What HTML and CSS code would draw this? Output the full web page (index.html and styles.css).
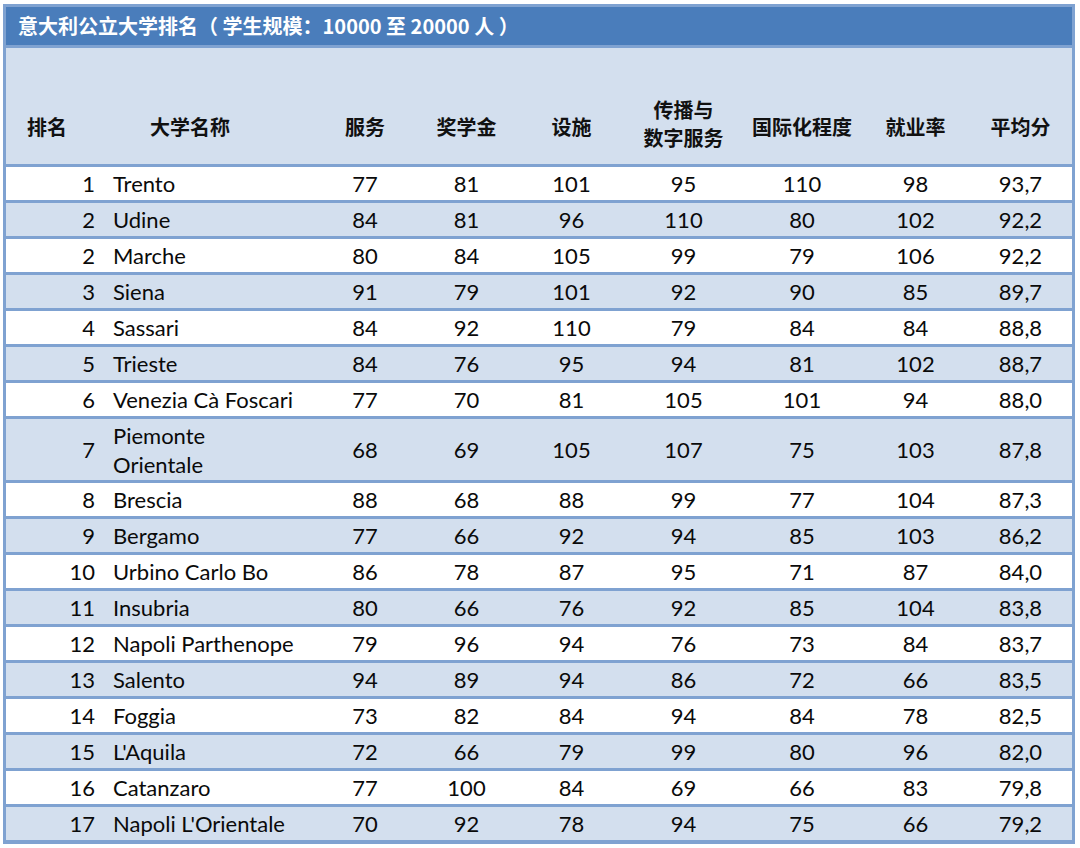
FILE: index.html
```html
<!DOCTYPE html>
<html lang="zh-CN">
<head>
<meta charset="utf-8">
<title>意大利公立大学排名</title>
<link rel="stylesheet" href="styles.css">
</head>
<body>
<div class="frame">
  <div class="title">意大利公立大学排名（ 学生规模：10000 至 20000 人 ）</div>
  <div class="head row">
    <div class="c rank-h">排名</div>
    <div class="c name-h">大学名称</div>
    <div class="c">服务</div>
    <div class="c">奖学金</div>
    <div class="c">设施</div>
    <div class="c two">传播与<br>数字服务</div>
    <div class="c">国际化程度</div>
    <div class="c">就业率</div>
    <div class="c">平均分</div>
  </div>
  <div class="row"><div class="c rank">1</div><div class="c name">Trento</div><div class="c">77</div><div class="c">81</div><div class="c">101</div><div class="c">95</div><div class="c">110</div><div class="c">98</div><div class="c">93,7</div></div>
  <div class="row alt"><div class="c rank">2</div><div class="c name">Udine</div><div class="c">84</div><div class="c">81</div><div class="c">96</div><div class="c">110</div><div class="c">80</div><div class="c">102</div><div class="c">92,2</div></div>
  <div class="row"><div class="c rank">2</div><div class="c name">Marche</div><div class="c">80</div><div class="c">84</div><div class="c">105</div><div class="c">99</div><div class="c">79</div><div class="c">106</div><div class="c">92,2</div></div>
  <div class="row alt"><div class="c rank">3</div><div class="c name">Siena</div><div class="c">91</div><div class="c">79</div><div class="c">101</div><div class="c">92</div><div class="c">90</div><div class="c">85</div><div class="c">89,7</div></div>
  <div class="row"><div class="c rank">4</div><div class="c name">Sassari</div><div class="c">84</div><div class="c">92</div><div class="c">110</div><div class="c">79</div><div class="c">84</div><div class="c">84</div><div class="c">88,8</div></div>
  <div class="row alt"><div class="c rank">5</div><div class="c name">Trieste</div><div class="c">84</div><div class="c">76</div><div class="c">95</div><div class="c">94</div><div class="c">81</div><div class="c">102</div><div class="c">88,7</div></div>
  <div class="row"><div class="c rank">6</div><div class="c name">Venezia Cà Foscari</div><div class="c">77</div><div class="c">70</div><div class="c">81</div><div class="c">105</div><div class="c">101</div><div class="c">94</div><div class="c">88,0</div></div>
  <div class="row alt tall"><div class="c rank">7</div><div class="c name">Piemonte<br>Orientale</div><div class="c">68</div><div class="c">69</div><div class="c">105</div><div class="c">107</div><div class="c">75</div><div class="c">103</div><div class="c">87,8</div></div>
  <div class="row"><div class="c rank">8</div><div class="c name">Brescia</div><div class="c">88</div><div class="c">68</div><div class="c">88</div><div class="c">99</div><div class="c">77</div><div class="c">104</div><div class="c">87,3</div></div>
  <div class="row alt"><div class="c rank">9</div><div class="c name">Bergamo</div><div class="c">77</div><div class="c">66</div><div class="c">92</div><div class="c">94</div><div class="c">85</div><div class="c">103</div><div class="c">86,2</div></div>
  <div class="row"><div class="c rank">10</div><div class="c name">Urbino Carlo Bo</div><div class="c">86</div><div class="c">78</div><div class="c">87</div><div class="c">95</div><div class="c">71</div><div class="c">87</div><div class="c">84,0</div></div>
  <div class="row alt"><div class="c rank">11</div><div class="c name">Insubria</div><div class="c">80</div><div class="c">66</div><div class="c">76</div><div class="c">92</div><div class="c">85</div><div class="c">104</div><div class="c">83,8</div></div>
  <div class="row"><div class="c rank">12</div><div class="c name">Napoli Parthenope</div><div class="c">79</div><div class="c">96</div><div class="c">94</div><div class="c">76</div><div class="c">73</div><div class="c">84</div><div class="c">83,7</div></div>
  <div class="row alt"><div class="c rank">13</div><div class="c name">Salento</div><div class="c">94</div><div class="c">89</div><div class="c">94</div><div class="c">86</div><div class="c">72</div><div class="c">66</div><div class="c">83,5</div></div>
  <div class="row"><div class="c rank">14</div><div class="c name">Foggia</div><div class="c">73</div><div class="c">82</div><div class="c">84</div><div class="c">94</div><div class="c">84</div><div class="c">78</div><div class="c">82,5</div></div>
  <div class="row alt"><div class="c rank">15</div><div class="c name">L'Aquila</div><div class="c">72</div><div class="c">66</div><div class="c">79</div><div class="c">99</div><div class="c">80</div><div class="c">96</div><div class="c">82,0</div></div>
  <div class="row"><div class="c rank">16</div><div class="c name">Catanzaro</div><div class="c">77</div><div class="c">100</div><div class="c">84</div><div class="c">69</div><div class="c">66</div><div class="c">83</div><div class="c">79,8</div></div>
  <div class="row alt last"><div class="c rank">17</div><div class="c name">Napoli L'Orientale</div><div class="c">70</div><div class="c">92</div><div class="c">78</div><div class="c">94</div><div class="c">75</div><div class="c">66</div><div class="c">79,2</div></div>
</div>
</body>
</html>
```
FILE: styles.css
```css
html, body {
  margin: 0;
  padding: 0;
  background: #ffffff;
}
body {
  font-family: Lato, "Noto Sans CJK SC", sans-serif;
  color: #0a0a0a;
}
.frame {
  margin: 4px 5px 5px 3px;
  width: 1066px;
  border: 3px solid #7fa2d1;
  background: #ffffff;
}
.title {
  height: 38px;
  line-height: 37px;
  padding-left: 12px;
  background: #4a7dbb;
  color: #ffffff;
  font-family: "Noto Sans CJK SC", sans-serif;
  font-weight: 700;
  font-size: 20px;
  letter-spacing: 0;
  border-bottom: 3px solid #7fa2d1;
  white-space: pre;
}
.row {
  display: grid;
  grid-template-columns: 94px 215px 100px 103px 107px 117px 120px 107px 103px;
  height: 33px;
  border-bottom: 3px solid #7fa2d1;
  font-size: 22px;
  background: #ffffff;
}
.row.alt {
  background: #d3dfee;
}
.row.tall {
  height: 61px;
}
.row.last {
  border-bottom: 1px solid #7fa2d1;
}
.c {
  display: flex;
  align-items: center;
  justify-content: center;
  text-align: center;
  line-height: 29px;
}
.rank {
  justify-content: flex-end;
  padding-right: 5px;
}
.name {
  justify-content: flex-start;
  text-align: left;
  padding-left: 13px;
}
.head {
  height: 74px;
  padding-top: 42px;
  background: #d3dfee;
  font-family: "Noto Sans CJK SC", sans-serif;
  font-weight: 700;
  font-size: 20px;
  color: #111;
}
.head .c {
  line-height: 28px;
}
.head .two {
  padding-bottom: 6px;
}
.rank-h {
  justify-content: flex-start;
  padding-left: 21px;
}
.name-h {
  justify-content: flex-start;
  padding-left: 50px;
}
```
